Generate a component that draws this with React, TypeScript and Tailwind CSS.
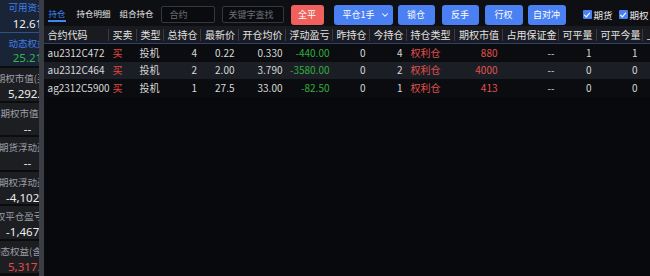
import { ChevronDown } from "lucide-react";

const GRID =
  "grid grid-cols-[65px_28px_27px_37.5px_37.5px_47px_47px_37px_37px_48.5px_47.5px_56px_38px_46px_60px]";

const headers = [
  "合约代码",
  "买卖",
  "类型",
  "总持仓",
  "最新价",
  "开仓均价",
  "浮动盈亏",
  "昨持仓",
  "今持仓",
  "持仓类型",
  "期权市值",
  "占用保证金",
  "可平量",
  "可平今量",
  "上日结算价",
];

const rows = [
  ["au2312C472", "买", "投机", "4", "0.22", "0.330", "-440.00", "0", "4", "权利仓", "880", "--", "1", "1", ""],
  ["au2312C464", "买", "投机", "2", "2.00", "3.790", "-3580.00", "0", "2", "权利仓", "4000", "--", "0", "0", ""],
  ["ag2312C5900", "买", "投机", "1", "27.5", "33.00", "-82.50", "0", "1", "权利仓", "413", "--", "0", "0", ""],
];

// per column: alignment + colour
const cellCls = [
  "text-left pl-[4px]",
  "text-left pl-[4px] text-[#e0483f]",
  "text-left pl-[3px]",
  "text-right pr-[4px]",
  "text-right pr-[4px]",
  "text-right pr-[3px]",
  "text-right pr-[3px] text-[#2fae3c]",
  "text-right pr-[4px]",
  "text-right pr-[4px]",
  "text-left pl-[4px] text-[#e0514c]",
  "text-right pr-[5px] text-[#e0514c]",
  "text-right pr-[4px]",
  "text-right pr-[5px]",
  "text-right pr-[5px]",
  "text-right pr-[4px]",
];

const account = [
  { label: "期权市值(买方)", value: "5,292.5", color: "text-[#eeeeee]" },
  { label: "期权市值(卖)", value: "--", color: "text-[#eeeeee]" },
  { label: "期货浮动盈亏", value: "--", color: "text-[#eeeeee]" },
  { label: "期权浮动盈亏", value: "-4,102.5", color: "text-[#eeeeee]" },
  { label: "期权平仓盈亏(逐笔)", value: "-1,467.5", color: "text-[#eeeeee]" },
  { label: "动态权益(含市值)", value: "5,317.7", color: "text-[#e84a4a]" },
];

function Check({ label, ml }: { label: string; ml: string }) {
  return (
    <label className={`flex shrink-0 items-center gap-[2px] whitespace-nowrap ${ml}`}>
      <span className="flex h-[9px] w-[9px] shrink-0 items-center justify-center rounded-[1px] bg-[#4a80f2]">
        <svg viewBox="0 0 10 10" className="h-[8px] w-[8px]" fill="none" stroke="#fff" strokeWidth={1.4}>
          <path d="M2 5.2 L4.2 7.3 L8.2 2.6" strokeLinecap="round" strokeLinejoin="round" />
        </svg>
      </span>
      <span className="text-[9.5px] leading-[12px] text-[#e6e6e6]">{label}</span>
    </label>
  );
}

export default function App() {
  return (
    <div className="flex h-[276px] w-[650px] overflow-hidden bg-[#0a0b0e] font-['Noto_Sans_CJK_SC','Noto_Sans',sans-serif]">
      {/* account summary column, clipped */}
      <aside className="flex w-[39px] shrink-0 flex-col overflow-hidden bg-[#0b0c0e]">
        <div className="h-[32px] shrink-0 overflow-hidden bg-[#1a2437] pt-[1px]">
          <div className="flex w-[55px] flex-col items-center whitespace-nowrap">
            <span className="text-[9.5px] leading-[12px] text-[#3f7fe6]">可用资金</span>
            <span className="mt-[3px] font-['Noto_Sans',sans-serif] text-[11.5px] leading-[16px] text-[#f0f0f0]">12.61</span>
          </div>
        </div>
        <div className="h-px shrink-0 bg-[#2f518e]" />
        <div className="h-[33px] shrink-0 overflow-hidden bg-[#1a2437] pt-[4px]">
          <div className="flex w-[55px] flex-col items-center whitespace-nowrap">
            <span className="text-[9.5px] leading-[12px] text-[#3f7fe6]">动态权益</span>
            <span className="mt-[1px] font-['Noto_Sans',sans-serif] text-[11.5px] leading-[16px] text-[#32b84a]">25.21</span>
          </div>
        </div>
        {account.map((a) => (
          <div key={a.label} className="mt-[2px] h-[32.5px] shrink-0 overflow-hidden bg-[#1c1e22] pt-[4px]">
            <div className="flex w-[55px] flex-col items-center whitespace-nowrap">
              <span className="text-[9.5px] leading-[12px] text-[#9c9fa5]">{a.label}</span>
              <span className={`mt-[2px] font-['Noto_Sans',sans-serif] text-[11.5px] leading-[16px] ${a.color}`}>{a.value}</span>
            </div>
          </div>
        ))}
      </aside>
      <div className="w-[4.5px] shrink-0 bg-[#3a3d44]" />

      <main className="flex min-w-0 flex-1 flex-col overflow-hidden">
        {/* toolbar */}
        <div className="flex h-[26px] shrink-0 items-center whitespace-nowrap bg-[#0e0f13] text-[8.5px]">
          <div className="ml-[4px] flex h-full shrink-0 flex-col items-center justify-center">
            <span className="mt-[3px] px-[1px] leading-[12px] text-[#3d86f5]">持仓</span>
            <span className="mt-[1px] h-[1.5px] w-[18px] bg-[#3d86f5]" />
          </div>
          <span className="ml-[10px] mt-[-1px] shrink-0 leading-[12px] text-[#e6e6e6]">持仓明细</span>
          <span className="ml-[9px] mt-[-1px] shrink-0 leading-[12px] text-[#e6e6e6]">组合持仓</span>
          <div className="ml-[7px] mt-[3px] flex h-[17px] w-[54px] shrink-0 items-center rounded-[2px] border border-[#34373e] bg-[#0a0b0e] pl-[8px] text-[9px] text-[#6c6f76]">
            合约
          </div>
          <div className="ml-[7px] mt-[3px] flex h-[17px] w-[62px] shrink-0 items-center rounded-[2px] border border-[#34373e] bg-[#0a0b0e] pl-[6px] text-[9px] text-[#6c6f76]">
            关键字查找
          </div>
          <button className="ml-[7px] mt-[3px] h-[20px] w-[33px] shrink-0 rounded-[3px] bg-[#f0605d] text-[9px] text-white">
            全平
          </button>
          <button className="ml-[10px] mt-[3px] flex h-[20px] w-[59px] shrink-0 items-center justify-between rounded-[3px] bg-[#4a80f2] pl-[9px] pr-[3px] text-[9px] text-white">
            <span>平仓1手</span>
            <ChevronDown className="h-[10px] w-[10px]" strokeWidth={2.5} />
          </button>
          <button className="ml-[5px] mt-[3px] h-[20px] w-[37px] shrink-0 rounded-[3px] bg-[#4a80f2] text-[9px] text-white">
            锁仓
          </button>
          <button className="ml-[7px] mt-[3px] h-[20px] w-[37px] shrink-0 rounded-[3px] bg-[#4a80f2] text-[9px] text-white">
            反手
          </button>
          <button className="ml-[6px] mt-[3px] h-[20px] w-[38px] shrink-0 rounded-[3px] bg-[#4a80f2] text-[9px] text-white">
            行权
          </button>
          <button className="ml-[5px] mt-[3px] h-[20px] w-[38px] shrink-0 rounded-[3px] bg-[#4a80f2] text-[9px] text-white">
            自对冲
          </button>
          <div className="mt-[3px] flex shrink-0">
            <Check label="期货" ml="ml-[17px]" />
            <Check label="期权" ml="ml-[6px]" />
          </div>
        </div>

        {/* table header */}
        <div className={`${GRID} h-[18px] w-max shrink-0 border-b border-[#2c4276] bg-[#191b21] py-[3px] text-[10px] text-[#e2e2e2]`}>
          {headers.map((h) => (
            <div key={h} className="h-[12px] overflow-hidden whitespace-nowrap border-r border-[#3a3c43] pl-[4px] leading-[12px]">
              {h}
            </div>
          ))}
        </div>

        {/* rows */}
        {rows.map((r, i) => (
          <div
            key={r[0]}
            className={`${GRID} h-[17.5px] w-max shrink-0 items-center text-[10px] leading-[12px] text-[#d8d8d8] ${
              i === 1 ? "bg-[#1c1e25]" : "bg-[#0b0c10]"
            }`}
          >
            {r.map((c, j) => (
              <div key={j} className={`whitespace-nowrap ${cellCls[j]}`}>
                {c}
              </div>
            ))}
          </div>
        ))}
        <div className="flex-1 bg-[#08090c]" />
      </main>
    </div>
  );
}
